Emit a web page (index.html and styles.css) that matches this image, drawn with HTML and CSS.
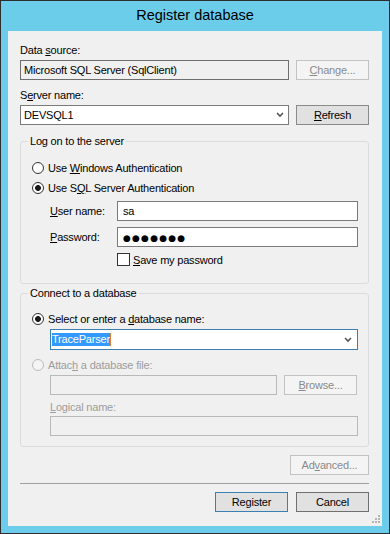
FILE: index.html
```html
<!DOCTYPE html>
<html lang="en">

<head>
  <meta charset="UTF-8">
  <meta name="viewport" content="width=device-width, initial-scale=1.0">
  <title>Register database</title>
  <link rel="stylesheet" href="styles.css">
</head>

<body>
  <div class="dlg-window">
    <div class="dlg-title">Register database</div>
    <div class="dlg-client">
      <div class="dlg-label dlg-first">Data <u>s</u>ource:</div>
      <div class="dlg-row">
        <div class="dlg-field dlg-readonly">Microsoft SQL Server (SqlClient)</div>
        <div class="dlg-btn dlg-disabled"><u>C</u>hange...</div>
      </div>

      <div class="dlg-label dlg-gap">S<u>e</u>rver name:</div>
      <div class="dlg-row">
        <div class="dlg-field dlg-combo">
          <span>DEVSQL1</span>
          <svg width="8" height="6" viewBox="0 0 8 6"><path d="M1 1l3 3 3-3" stroke="#555" stroke-width="1.6" fill="none" /></svg>
        </div>
        <div class="dlg-btn"><u>R</u>efresh</div>
      </div>

      <fieldset class="dlg-group dlg-group-logon">
        <legend>Log on to the server</legend>
        <div class="dlg-group-body">
          <div class="dlg-radio-row">
            <span class="dlg-radio"></span>
            <span>Use <u>W</u>indows Authentication</span>
          </div>
          <div class="dlg-radio-row">
            <span class="dlg-radio dlg-checked"></span>
            <span>Use S<u>Q</u>L Server Authentication</span>
          </div>
          <div class="dlg-indent dlg-cred dlg-cred-first">
            <div class="dlg-cred-label"><u>U</u>ser name:</div>
            <div class="dlg-field dlg-input">sa</div>
          </div>
          <div class="dlg-indent dlg-cred">
            <div class="dlg-cred-label"><u>P</u>assword:</div>
            <div class="dlg-field dlg-input"><span class="dlg-dots">●●●●●●●</span></div>
          </div>
          <div class="dlg-check-row">
            <span class="dlg-check"></span>
            <span><u>S</u>ave my password</span>
          </div>
        </div>
      </fieldset>

      <fieldset class="dlg-group dlg-group-db">
        <legend>Connect to a database</legend>
        <div class="dlg-group-body dlg-db-body">
          <div class="dlg-radio-row">
            <span class="dlg-radio dlg-checked"></span>
            <span>Select or enter a <u>d</u>atabase name:</span>
          </div>
          <div class="dlg-indent">
            <div class="dlg-field dlg-combo dlg-focus">
              <span class="dlg-sel">TraceParser</span><span class="dlg-caret"></span>
              <svg width="8" height="6" viewBox="0 0 8 6"><path d="M1 1l3 3 3-3" stroke="#555" stroke-width="1.6" fill="none" /></svg>
            </div>
          </div>
          <div class="dlg-radio-row dlg-off dlg-attach">
            <span class="dlg-radio"></span>
            <span>Attac<u>h</u> a database file:</span>
          </div>
          <div class="dlg-indent dlg-row dlg-file-row">
            <div class="dlg-field dlg-disabled-field"></div>
            <div class="dlg-btn dlg-disabled dlg-browse"><u>B</u>rowse...</div>
          </div>
          <div class="dlg-indent dlg-label dlg-off dlg-logical"><u>L</u>ogical name:</div>
          <div class="dlg-indent dlg-logical-field">
            <div class="dlg-field dlg-disabled-field"></div>
          </div>
        </div>
      </fieldset>

      <div class="dlg-btn dlg-disabled dlg-advanced">Ad<u>v</u>anced...</div>
      <div class="dlg-sep"></div>
      <div class="dlg-actions">
        <div class="dlg-btn dlg-default">Register</div>
        <div class="dlg-btn dlg-cancel">Cancel</div>
      </div>

      <svg class="dlg-grip" width="8" height="8" viewBox="0 0 8 8">
        <rect x="6" y="0" width="2" height="2" fill="#b5b5b5" />
        <rect x="3" y="3" width="2" height="2" fill="#b5b5b5" />
        <rect x="6" y="3" width="2" height="2" fill="#b5b5b5" />
        <rect x="0" y="6" width="2" height="2" fill="#b5b5b5" />
        <rect x="3" y="6" width="2" height="2" fill="#b5b5b5" />
        <rect x="6" y="6" width="2" height="2" fill="#b5b5b5" />
      </svg>
    </div>
  </div>
</body>

</html>
```

FILE: styles.css
```css
* {
  margin: 0;
  padding: 0;
  box-sizing: border-box;
}

body {
  font-family: "Liberation Sans", Arial, sans-serif;
  font-size: 11px;
  letter-spacing: -0.2px;
  color: #000;
  background: #2b2b2b;
}

u {
  text-decoration: underline;
  text-underline-offset: 1px;
}

.dlg-window {
  width: 390px;
  height: 534px;
  border: 1px solid #2d2d2d;
  background: #6ccdea;
  display: flex;
  flex-direction: column;
}

.dlg-title {
  height: 30px;
  line-height: 28px;
  text-align: center;
  font-size: 14.5px;
  letter-spacing: 0;
  color: #000;
}

.dlg-client {
  position: relative;
  flex: 1;
  margin: 0 7px 7px 7px;
  padding: 0 13px 0 12px;
  background: #f0f0f0;
  display: flex;
  flex-direction: column;
}

.dlg-label {
  height: 15px;
  line-height: 15px;
}

.dlg-first {
  margin-top: 12px;
}

.dlg-gap {
  margin-top: 8px;
}

.dlg-row {
  margin-top: 2px;
  display: flex;
  column-gap: 7px;
}

.dlg-field {
  flex: 1;
  height: 20px;
  line-height: 18px;
  padding: 0 3px;
  border: 1px solid #7a7a7a;
  background: #fff;
  white-space: nowrap;
  overflow: hidden;
}

.dlg-readonly {
  background: #f0f0f0;
  border-color: #6e6e6e;
}

.dlg-combo {
  display: flex;
  align-items: center;
  justify-content: space-between;
  padding-right: 4px;
}

.dlg-btn {
  width: 73px;
  height: 20px;
  line-height: 18px;
  text-align: center;
  border: 1px solid #8a8a8a;
  background: #e1e1e1;
  flex-shrink: 0;
}

.dlg-disabled {
  border-color: #c2c2c2;
  background: #f4f4f4;
  color: #8a8a8a;
}

/* group boxes */
.dlg-group {
  border: 1px solid #dcdcdc;
  border-radius: 3px;
  padding: 0;
  min-width: 0;
}

.dlg-group legend {
  margin-left: 7px;
  padding: 0 2px;
  height: 15px;
  line-height: 15px;
}

.dlg-group-logon {
  margin-top: 9px;
}

.dlg-group-db {
  margin-top: 2px;
}

.dlg-group-body {
  padding: 9px 10px 17px 11px;
  display: flex;
  flex-direction: column;
}

.dlg-db-body {
  padding-top: 8px;
  padding-bottom: 10px;
}

.dlg-radio-row {
  height: 20px;
  display: flex;
  align-items: center;
  column-gap: 4px;
}

.dlg-radio {
  width: 12px;
  height: 12px;
  border: 1px solid #333;
  border-radius: 50%;
  background: #fff;
}

.dlg-checked {
  background: radial-gradient(circle, #1a1a1a 0 2.6px, #fff 3.2px);
}

.dlg-off {
  color: #9d9d9d;
}

.dlg-off .dlg-radio {
  border-color: #bcbcbc;
  background: #f4f4f4;
}

.dlg-indent {
  margin-left: 18px;
}

.dlg-cred {
  display: flex;
  align-items: center;
  margin-top: 6px;
}

.dlg-cred-first {
  margin-top: 3px;
}

.dlg-cred-label {
  width: 67px;
}

.dlg-input {
  padding-left: 5px;
}

.dlg-dots {
  font-family: "DejaVu Sans", sans-serif;
  font-size: 9px;
  letter-spacing: 1.2px;
}

.dlg-check-row {
  margin-top: 6px;
  margin-left: 85px;
  height: 13px;
  display: flex;
  align-items: center;
  column-gap: 3px;
}

.dlg-check {
  width: 13px;
  height: 13px;
  border: 1px solid #333;
  background: #fff;
}

.dlg-focus {
  height: 21px;
  border-color: #3c7fb1;
  padding-left: 1px;
  padding-right: 5px;
}

.dlg-sel {
  background: #3399ff;
  color: #fff;
  line-height: 13px;
}

.dlg-caret {
  width: 1px;
  height: 13px;
  background: #e0803a;
  margin-right: auto;
}

.dlg-attach {
  margin-top: 5px;
}

.dlg-file-row {
  margin-top: 0;
  margin-right: 1px;
}

.dlg-disabled-field {
  background: #f0f0f0;
  border-color: #b9b9b9;
  height: 20px;
}

.dlg-logical {
  margin-top: 5px;
}

.dlg-logical-field {
  margin-top: 1px;
  display: flex;
}

.dlg-advanced {
  align-self: flex-end;
  width: 79px;
  margin-top: 8px;
}

.dlg-sep {
  margin-top: 8px;
  height: 1px;
  background: #a0a0a0;
}

.dlg-actions {
  margin-top: 8px;
  display: flex;
  justify-content: flex-end;
  column-gap: 8px;
}

.dlg-default {
  border-color: #3c7fb1;
}

.dlg-cancel {
  border-color: #707070;
}

.dlg-grip {
  position: absolute;
  right: 2px;
  bottom: 3px;
}
```
